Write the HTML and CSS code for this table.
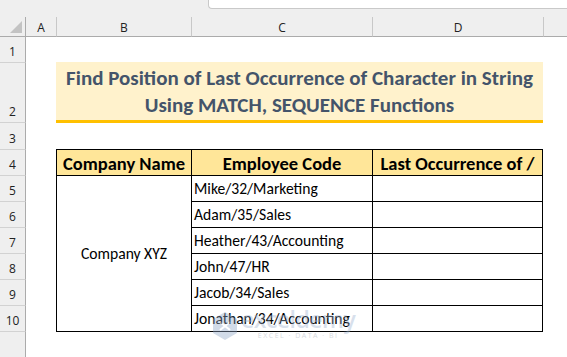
FILE: index.html
```html
<!DOCTYPE html>
<html>
<head>
<meta charset="utf-8">
<link rel="stylesheet" href="styles.css">
</head>
<body>
<div class="app">
  <div class="topbar"><div class="formula"></div></div>
  <div class="sheet">
    <div class="corner"><div class="tri"></div></div>
    <div class="colhead ch-a">A</div>
    <div class="colhead sep">B</div>
    <div class="colhead sep">C</div>
    <div class="colhead sep">D</div>
    <div class="colhead sep"></div>

    <div class="rowhead r1">1</div>
    <div class="rowhead r2">2</div>
    <div class="rowhead r3">3</div>
    <div class="rowhead r4">4</div>
    <div class="rowhead r5">5</div>
    <div class="rowhead r6">6</div>
    <div class="rowhead r7">7</div>
    <div class="rowhead r8">8</div>
    <div class="rowhead r9">9</div>
    <div class="rowhead r10">10</div>
    <div class="rowhead r11"></div>

    <div class="title">
      <div>Find Position of Last Occurrence of Character in String</div>
      <div>Using MATCH, SEQUENCE Functions</div>
    </div>

    <div class="table">
      <div class="cell th">Company Name</div>
      <div class="cell th">Employee Code</div>
      <div class="cell th">Last Occurrence of /</div>
      <div class="cell company">Company XYZ</div>
      <div class="cell">Mike/32/Marketing</div><div class="cell"></div>
      <div class="cell">Adam/35/Sales</div><div class="cell"></div>
      <div class="cell">Heather/43/Accounting</div><div class="cell"></div>
      <div class="cell">John/47/HR</div><div class="cell"></div>
      <div class="cell">Jacob/34/Sales</div><div class="cell"></div>
      <div class="cell">Jonathan/34/Accounting</div><div class="cell"></div>
    </div>

    <div class="watermark">
      <svg class="wm-icon" width="28" height="30" viewBox="0 0 28 30">
        <path d="M14 1 L26 8 L26 22 L14 29 L2 22 L2 8 Z" fill="#8ea6c6"/>
        <path d="M9 11 L14 15 L9 19 M19 11 L14 15 L19 19" stroke="#fff" stroke-width="2.2" fill="none"/>
      </svg>
      <div class="wm-text">
        <div class="wm-name">exceldemy</div>
        <div class="wm-sub">EXCEL · DATA · BI</div>
      </div>
    </div>
  </div>
</div>
</body>
</html>
```

FILE: styles.css
```css
html, body {
  margin: 0;
  padding: 0;
  background: #ffffff;
}
.app {
  width: 567px;
  height: 357px;
  overflow: hidden;
  background: #ffffff;
}
.topbar {
  height: 17px;
  background: #efefef;
  position: relative;
}
.formula {
  margin-left: 208px;
  height: 9px;
  background: #ffffff;
  border: 1px solid #c9c9c9;
  border-top: none;
  border-right: none;
  border-bottom-left-radius: 4px;
  box-sizing: border-box;
}
.sheet {
  position: relative;
  display: grid;
  grid-template-columns: 26px 30px 135px 181px 171px 1fr;
  grid-template-rows: 20px 26px 60px 27px 26px 26px 26px 26px 26px 26px 26px 40px;
  font-family: "Segoe UI", "Open Sans", "Noto Sans", sans-serif;
}
.corner {
  background: #efefef;
  border-right: 1px solid #ababab;
  border-bottom: 1px solid #ababab;
  box-sizing: border-box;
  position: relative;
}
.tri {
  position: absolute;
  right: 3px;
  bottom: 3px;
  width: 0;
  height: 0;
  border-left: 12px solid transparent;
  border-bottom: 12px solid #c3c3c3;
}
.colhead {
  background: #efefef;
  border-bottom: 1px solid #ababab;
  box-sizing: border-box;
  display: flex;
  align-items: center;
  justify-content: center;
  font-size: 12px;
  color: #222;
  padding-top: 1px;
}
.colhead.sep {
  border-left: 1px solid #c8c8c8;
}
.rowhead {
  grid-column: 1;
  background: #efefef;
  border-right: 1px solid #ababab;
  border-bottom: 1px solid #d2d2d2;
  box-sizing: border-box;
  display: flex;
  align-items: flex-end;
  justify-content: center;
  padding-bottom: 3px;
  font-size: 12px;
  color: #222;
  line-height: 14px;
}
.r11 { border-bottom: none; }

.title {
  grid-column: 3 / 6;
  grid-row: 3;
  background: #fff2cc;
  border-bottom: 3px solid #ffc000;
  margin-top: -1px;
  box-sizing: border-box;
  display: flex;
  flex-direction: column;
  align-items: center;
  justify-content: center;
  font-family: Carlito, Calibri, Lato, sans-serif;
  font-weight: bold;
  font-size: 21px;
  line-height: 27px;
  color: #44546a;
  padding-top: 1px;
}

.table {
  grid-column: 3 / 6;
  grid-row: 5 / 12;
  margin-top: -1px;
  display: grid;
  grid-template-columns: 135px 181px 170px;
  grid-template-rows: repeat(7, 26px);
  border-top: 1px solid #000;
  border-left: 1px solid #000;
  font-family: Carlito, Calibri, Lato, sans-serif;
  font-size: 15.6px;
  color: #000;
}
.cell {
  border-right: 1px solid #000;
  border-bottom: 1px solid #000;
  box-sizing: border-box;
  display: flex;
  align-items: center;
  padding-left: 2px;
  white-space: nowrap;
}
.th {
  background: #ffe699;
  font-weight: bold;
  font-size: 18.5px;
  justify-content: center;
  padding-left: 0;
  padding-top: 1px;
}
.company {
  grid-row: 2 / 8;
  justify-content: center;
  padding-left: 0;
}

.watermark {
  position: absolute;
  left: 211px;
  top: 291px;
  display: flex;
  align-items: flex-start;
  gap: 2px;
  opacity: 0.4;
  pointer-events: none;
}
.wm-icon { margin-top: 3px; }
.wm-text {
  display: flex;
  flex-direction: column;
  align-items: center;
}
.wm-name {
  font-family: "Open Sans", sans-serif;
  font-size: 23px;
  font-weight: 600;
  line-height: 23px;
  color: #9fb3d0;
  letter-spacing: -0.5px;
}
.wm-sub {
  font-family: "Open Sans", sans-serif;
  font-size: 7px;
  line-height: 9px;
  letter-spacing: 1.5px;
  color: #9aa3ae;
}
```
